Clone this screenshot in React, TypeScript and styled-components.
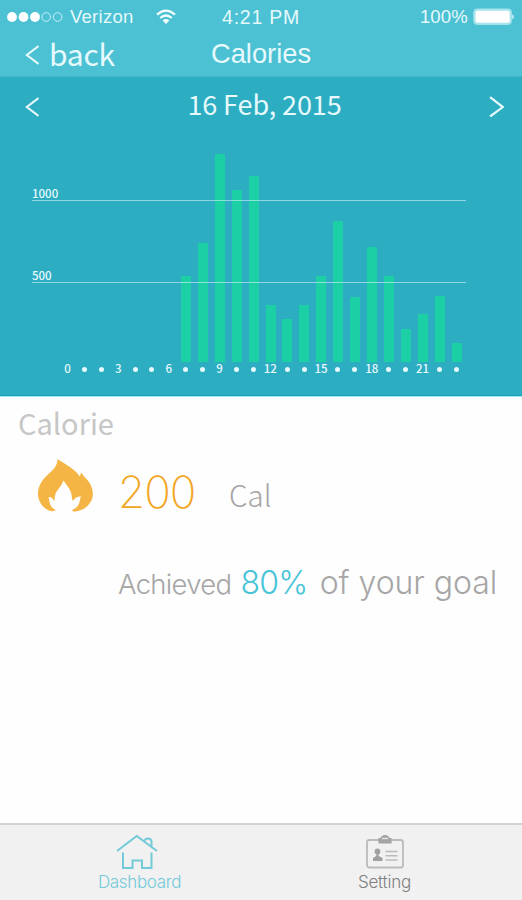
import React from "react";
import styled, { createGlobalStyle } from "styled-components";

const humanist = `"Noto Sans CJK SC", "Noto Sans", sans-serif`;
const grotesque = `"Liberation Sans", Arial, sans-serif`;
const light = `Inter, "Liberation Sans", sans-serif`;

const GlobalStyle = createGlobalStyle`
  * { box-sizing: border-box; }
  body { margin: 0; background: #fff; }
`;

const Screen = styled.div`
  width: 522px;
  height: 900px;
  display: flex;
  flex-direction: column;
  background: #fefefe;
  overflow: hidden;
`;

const Header = styled.header`
  height: 77px;
  flex: none;
  background: #4cc1d3;
  border-bottom: 1px solid #40b6c8;
  color: #e6f9fc;
`;

const StatusBar = styled.div`
  display: grid;
  grid-template-columns: 1fr auto 1fr;
  align-items: center;
  height: 33px;
  padding: 0 7px 0 7px;
  font: 18.5px/33px ${grotesque};
`;

const StatusGroup = styled.div<{ $end?: boolean }>`
  display: flex;
  align-items: center;
  justify-content: ${(p) => (p.$end ? "flex-end" : "flex-start")};
  height: 33px;
`;

const Carrier = styled.span`
  margin: 0 23px 0 7px;
  height: 33px;
  line-height: 34px;
  letter-spacing: 0.25px;
`;

const Clock = styled.span`
  height: 33px;
  font-size: 19.5px;
  line-height: 34px;
  letter-spacing: 0.75px;
`;

const Percent = styled.span`
  height: 33px;
  line-height: 34px;
  margin-right: 5px;
  letter-spacing: 0.2px;
`;

const NavBar = styled.div`
  display: grid;
  grid-template-columns: 1fr auto 1fr;
  height: 43px;
  padding-left: 25px;
  padding-right: 25px;
`;

const BackButton = styled.button`
  display: flex;
  align-items: center;
  gap: 10px;
  height: 43px;
  padding: 0;
  border: 0;
  background: none;
  color: inherit;
  font: 30px/41px ${humanist};
`;

const BackLabel = styled.span`
  height: 43px;
  letter-spacing: -0.25px;
`;

const Title = styled.h1`
  margin: 0;
  font: 400 27.3px/42px ${grotesque};
  letter-spacing: 0;
`;

const ChartPanel = styled.section`
  height: 319px;
  flex: none;
  background: #2dadc2;
  border-bottom: 1px solid #15a4bb;
  color: #e6f9fc;
`;

const DateBar = styled.div`
  display: flex;
  align-items: center;
  justify-content: space-between;
  height: 59px;
  padding: 0 18px 0 25px;
`;

const DateLabel = styled.span`
  height: 59px;
  margin-left: 1px;
  font: 27px/53px ${humanist};
  letter-spacing: -0.1px;
`;

const ArrowButton = styled.button`
  display: flex;
  padding: 0;
  border: 0;
  background: none;
  color: inherit;
`;

const Chart = styled.div`
  position: relative;
  height: 226px;
  width: 434px;
  margin-left: 32px;
`;

const GridLine = styled.div<{ $top: number }>`
  position: absolute;
  z-index: 1;
  left: 0;
  right: 0;
  top: ${(p) => p.$top}px;
  height: 15px;
  border-bottom: 1.5px solid rgba(205, 240, 247, 0.62);
  font: 500 11.5px/15px ${humanist};
`;

const Bars = styled.div`
  display: grid;
  grid-template-columns: repeat(24, 16.93px);
  align-items: end;
  justify-items: center;
  height: 226px;
  padding-left: 27px;
`;

const Bar = styled.div`
  width: 10px;
  background: #1ccfa4;
`;

const Hours = styled.div`
  display: grid;
  grid-template-columns: repeat(24, 16.91px);
  width: 434px;
  margin-left: 32px;
  padding-left: 27px;
  height: 15px;
`;

const Hour = styled.div`
  display: flex;
  align-items: center;
  justify-content: center;
  height: 15px;
  font: 500 11.5px/13px ${humanist};
`;

const HourLabel = styled.span`
  height: 15px;
`;

const Dot = styled.i`
  width: 5px;
  height: 5px;
  border-radius: 50%;
  background: currentColor;
`;

const Summary = styled.main`
  flex: 1;
  border-top: 1px solid #a5e5ef;
`;

const SectionTitle = styled.h2`
  margin: 0;
  padding-left: 18px;
  font: 400 29px/50px ${humanist};
  height: 52px;
  color: #c6c6c6;
  letter-spacing: 0;
`;

const Reading = styled.div`
  display: flex;
  height: 86px;
  padding: 10px 0 0 37px;
`;

const Amount = styled.span`
  margin-left: 24px;
  width: 77px;
  font: 200 44px/67px ${light};
  letter-spacing: -1px;
  color: #f2a623;
`;

const Unit = styled.span`
  margin-left: 34px;
  font: 300 29.5px/71px ${humanist};
  color: #a3a3a3;
`;

const Goal = styled.p`
  display: flex;
  align-items: baseline;
  margin: 27px 0 0 118px;
  font: 300 32px/41px ${light};
  color: #a6a6a6;
  white-space: pre;
`;

const Achieved = styled.span`
  font-size: 27.5px;
  letter-spacing: -0.7px;
`;

const Share = styled.span`
  margin: 0 12px 0 9px;
  letter-spacing: -0.7px;
  color: #48c4d8;
`;

const GoalTail = styled.span`
  letter-spacing: -0.05px;
`;

const TabBar = styled.nav`
  display: flex;
  height: 77px;
  flex: none;
  background: #f1f1f1;
  border-top: 2px solid #d3d3d3;
`;

const Tab = styled.a<{ $active?: boolean; $shift: number }>`
  display: flex;
  flex-direction: column;
  align-items: center;
  width: 261px;
  padding-left: ${(p) => Math.max(0, p.$shift)}px;
  padding-right: ${(p) => Math.max(0, -p.$shift)}px;
  padding-top: 9px;
  color: ${(p) => (p.$active ? "#73cad9" : "#808080")};
  font: 300 17px/20px ${light};
`;

const TabLabel = styled.span<{ $spacing: number; $indent?: number }>`
  margin-top: 2px;
  margin-left: ${(p) => p.$indent ?? 0}px;
  letter-spacing: ${(p) => p.$spacing}px;
`;

const Chevron = ({ right = false, h = 20, w = 14 }: { right?: boolean; h?: number; w?: number }) => (
  <svg width={w} height={h} viewBox="0 0 14 20" fill="none" stroke="currentColor" strokeWidth="2.1" preserveAspectRatio="none">
    <path d={right ? "M1 1L13 10.5L1 19.5" : "M13.5 1L1.8 10L13.5 19"} />
  </svg>
);

const Signal = () => (
  <svg width="56" height="12" viewBox="0 0 56 12">
    {[0, 1, 2, 3, 4].map((i) =>
      i < 3 ? (
        <circle key={i} cx={5 + i * 11.5} cy="6" r="4.9" fill="#fff" />
      ) : (
        <circle key={i} cx={5 + i * 11.4} cy="6" r="4.3" fill="none" stroke="#c9f1f7" strokeWidth="1" />
      )
    )}
  </svg>
);

const Wifi = () => (
  <svg width="20" height="16" viewBox="0 0 20 16" fill="none" stroke="#f4fdff" strokeWidth="2.2">
    <path d="M1 5.6Q10 -2.4 19 5.6" />
    <path d="M4.2 9Q10 4 15.8 9" />
    <path d="M6.6 11.4Q10 8.6 13.4 11.4L10 15Z" fill="#f4fdff" stroke="none" />
  </svg>
);

const Battery = () => (
  <svg width="42" height="18" viewBox="0 0 42 18">
    <rect x="0.8" y="1" width="37.6" height="15.4" rx="3" fill="#a5e3ec" stroke="#a5e3ec" />
    <rect x="2.5" y="2.8" width="34.2" height="12" rx="2" fill="#fff" />
    <path d="M39.4 6.2Q42 8.8 39.4 11.4Z" fill="#f4fdff" />
  </svg>
);

const Flame = () => (
  <svg width="57" height="53" viewBox="0 0 57 53">
    <path
      fill="#f5b544"
      d="M20.5 0C26 4 34 7.500 41 15L42.500 17.500L44.500 13.500C46 17 49.500 19.500 52 23C56 29 57.500 37 53.500 43C50.500 48 45 52 38 52.500C36.500 52.600 35 52 35.200 51C39 49.500 42 46.500 42.600 42.500C43 40.500 43.500 38.600 44 37.500C42 37 38.500 38.300 37 40.500L36 42C34.500 40 35 36.500 34 33.500C33 29.500 29 25.500 26.500 21.500C25 26 21.500 29.500 19 33.500C17.500 36.500 18 39.500 17.300 42.200C16.500 39.700 13.500 37.500 11.400 38C12.600 40 12 43 13.500 46C14.600 48.500 16.500 50 18.500 51C17.500 52.500 14.500 52.500 11.500 51.200C5 48.500 1.500 42 1 36C.5 27 5.500 20.500 11.500 15C16 11 20.500 7 20.500 0Z"
    />
  </svg>
);

const House = () => (
  <svg width="42" height="36" viewBox="0 0 42 36" fill="none" stroke="currentColor" strokeWidth="2">
    <path d="M1 17L20.700 2L41 17" />
    <path d="M28 7.500C29 3.500 35 3.300 35.500 7.500V12" />
    <path d="M7 18.500V34H16.500V26.500H26V34H35.500V18.500" />
  </svg>
);

const Badge = () => (
  <svg width="38" height="36" viewBox="0 0 38 36" fill="none">
    <rect x="1" y="6" width="36" height="27.500" rx="2.500" stroke="#bbb" strokeWidth="1.800" />
    <path d="M13 9V4.500H15Q15.500 1.500 19 1.500T23 4.500H25V9Z" fill="#a5a5a5" stroke="#a5a5a5" strokeWidth="1.200" />
    <path d="M16 4.500H22" stroke="#e6e6e6" strokeWidth="1.400" />
    <circle cx="11.500" cy="17.500" r="2.900" fill="#a0a0a0" />
    <path d="M10.300 19H12.700V22L16.500 24V27H7V24L10.300 22Z" fill="#a0a0a0" />
    <path d="M19.500 17.500H31.500M19.500 21.700H31.500M19.500 26H31.500" stroke="#bbb" strokeWidth="1.600" />
  </svg>
);

const barHeights = [0, 0, 0, 0, 0, 0, 0, 86, 119, 208, 172, 186, 57, 43, 57, 86, 141, 65, 115, 86, 33, 48, 66, 19];

export default function App() {
  return (
    <Screen>
      <GlobalStyle />
      <Header>
        <StatusBar>
          <StatusGroup>
            <Signal />
            <Carrier>Verizon</Carrier>
            <Wifi />
          </StatusGroup>
          <Clock>4:21 PM</Clock>
          <StatusGroup $end>
            <Percent>100%</Percent>
            <Battery />
          </StatusGroup>
        </StatusBar>
        <NavBar>
          <BackButton>
            <Chevron />
            <BackLabel>back</BackLabel>
          </BackButton>
          <Title>Calories</Title>
        </NavBar>
      </Header>
      <ChartPanel>
        <DateBar>
          <ArrowButton aria-label="Previous day">
            <Chevron />
          </ArrowButton>
          <DateLabel>16 Feb, 2015</DateLabel>
          <ArrowButton aria-label="Next day">
            <Chevron right w={15} h={21} />
          </ArrowButton>
        </DateBar>
        <Chart>
          <GridLine $top={49.5}>1000</GridLine>
          <GridLine $top={132}>500</GridLine>
          <Bars>
            {barHeights.map((h, i) => (
              <Bar key={i} style={{ height: h }} />
            ))}
          </Bars>
        </Chart>
        <Hours>
          {barHeights.map((_, i) => (
            <Hour key={i}>{i % 3 === 0 ? <HourLabel>{i}</HourLabel> : <Dot />}</Hour>
          ))}
        </Hours>
      </ChartPanel>
      <Summary>
        <SectionTitle>Calorie</SectionTitle>
        <Reading>
          <Flame />
          <Amount>200</Amount>
          <Unit>Cal</Unit>
        </Reading>
        <Goal>
          <Achieved>Achieved</Achieved>
          <Share>80%</Share>
          <GoalTail>of your goal</GoalTail>
        </Goal>
      </Summary>
      <TabBar>
        <Tab $active $shift={12}>
          <House />
          <TabLabel $spacing={-0.35} $indent={6}>Dashboard</TabLabel>
        </Tab>
        <Tab $shift={-14}>
          <Badge />
          <TabLabel $spacing={-0.2}>Setting</TabLabel>
        </Tab>
      </TabBar>
    </Screen>
  );
}
